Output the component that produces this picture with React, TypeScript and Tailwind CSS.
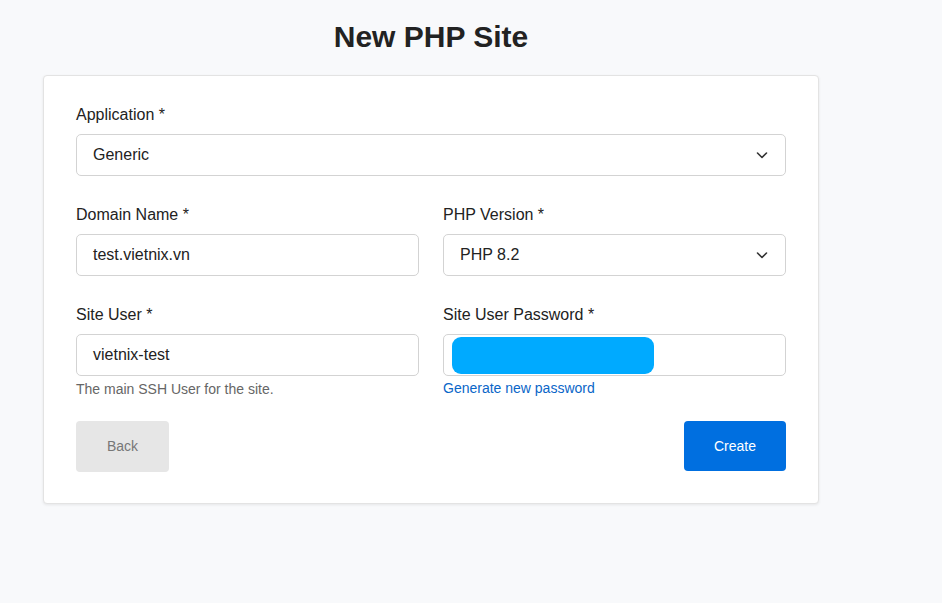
import React from "react";

function Chevron() {
  return (
    <svg width="14" height="14" viewBox="0 0 14 14" fill="none" className="text-[#333]">
      <path d="M2.5 5l4.5 4.5L11.5 5" stroke="currentColor" strokeWidth="1.6" strokeLinecap="round" strokeLinejoin="round" />
    </svg>
  );
}

const labelCls = "block text-[16px] leading-[22px] text-[#222] mb-[8px]";
const boxCls =
  "h-[42px] w-full rounded-[5px] border border-[#d3d3d3] bg-white flex items-center px-[16px] text-[16px] text-[#222]";

export default function App() {
  return (
    <div className="min-h-[603px] w-full bg-[#f8f9fb] pt-[19px] font-['Liberation_Sans',Arial,sans-serif]">
      <div className="ml-[43px] w-[776px]">
        <h1 className="text-center text-[30px] leading-[36px] font-bold text-[#222] mb-[20px]">New PHP Site</h1>
        <div className="rounded-[4px] border border-[#e3e3e3] bg-white shadow-[0_1px_3px_rgba(0,0,0,0.08)] px-[32px] pt-[28px] pb-[31px]">
          <div>
            <label className={labelCls}>Application *</label>
            <div className={boxCls + " justify-between"}>
              <span>Generic</span>
              <Chevron />
            </div>
          </div>
          <div className="grid grid-cols-2 gap-x-[24px] mt-[28px]">
            <div>
              <label className={labelCls}>Domain Name *</label>
              <div className={boxCls}>test.vietnix.vn</div>
            </div>
            <div>
              <label className={labelCls}>PHP Version *</label>
              <div className={boxCls + " justify-between"}>
                <span>PHP 8.2</span>
                <Chevron />
              </div>
            </div>
          </div>
          <div className="grid grid-cols-2 gap-x-[24px] mt-[28px]">
            <div>
              <label className={labelCls}>Site User *</label>
              <div className={boxCls}>vietnix-test</div>
              <p className="mt-[4px] text-[14px] leading-[18px] text-[#666]">The main SSH User for the site.</p>
            </div>
            <div>
              <label className={labelCls}>Site User Password *</label>
              <div className="h-[42px] w-full rounded-[5px] border border-[#d3d3d3] bg-white flex items-center pl-[8px]">
                <div className="h-[37px] w-[202px] rounded-[9px] bg-[#00aaff]" />
              </div>
              <a className="block mt-[3px] text-[14px] leading-[18px] text-[#0a66c8] cursor-pointer">Generate new password</a>
            </div>
          </div>
          <div className="flex justify-between mt-[23px]">
            <button className="h-[51px] w-[93px] rounded-[4px] bg-[#e6e6e6] text-[14px] text-[#777]">Back</button>
            <button className="h-[50px] w-[102px] rounded-[4px] bg-[#006fe0] text-[14px] text-white">Create</button>
          </div>
        </div>
      </div>
    </div>
  );
}
